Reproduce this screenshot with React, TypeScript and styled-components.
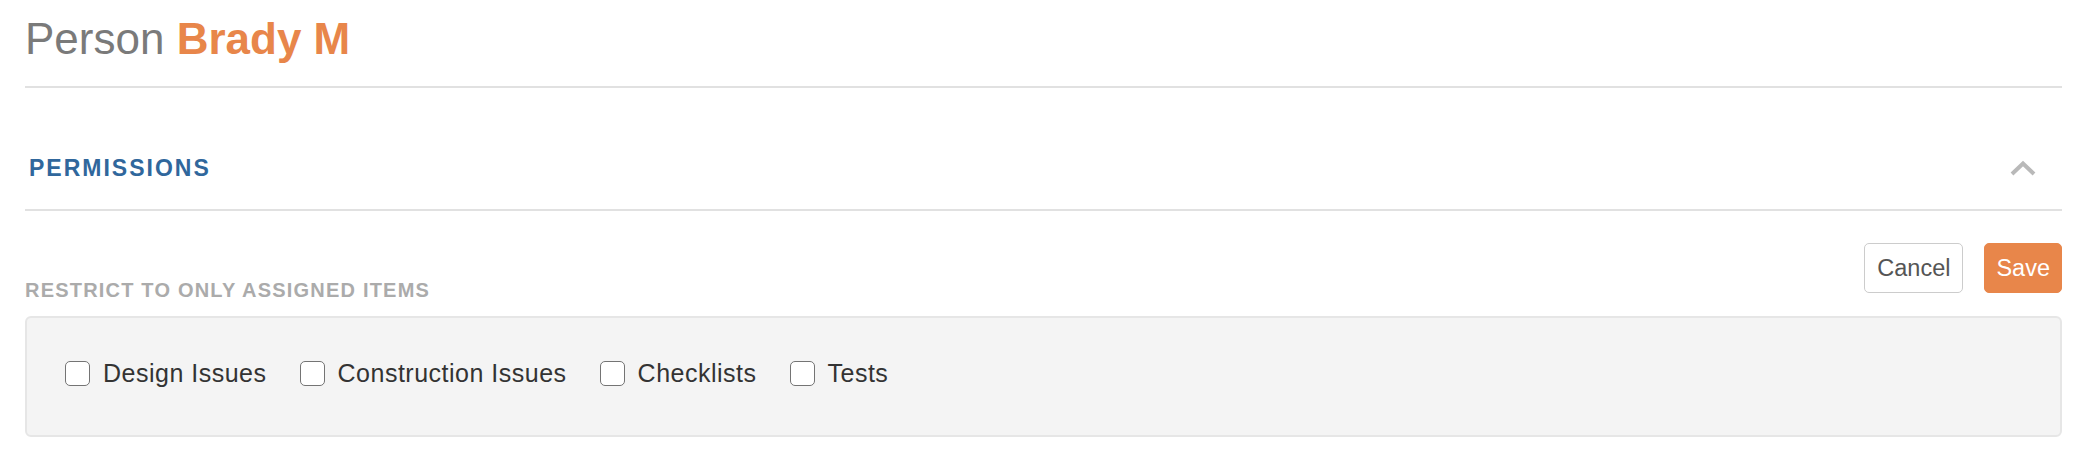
import { useState } from "react"
import styled, { createGlobalStyle } from "styled-components"

const GlobalStyle = createGlobalStyle`
  html, body {
    margin: 0;
    padding: 0;
    background: #ffffff;
  }
  body {
    font-family: "Liberation Sans", Arial, Helvetica, sans-serif;
  }
`

const orange = "#e8864a"

const Page = styled.div`
  margin: 0 24px 0 25px;
`

const Header = styled.h1`
  margin: 0;
  padding-top: 14px;
  padding-bottom: 22px;
  line-height: 50px;
  font-size: 44px;
  font-weight: normal;
  color: #7a7a7a;
  border-bottom: 2px solid #e1e1e1;
  white-space: nowrap;

  strong {
    color: ${orange};
    font-weight: bold;
  }
`

const SectionBar = styled.div`
  display: flex;
  align-items: center;
  justify-content: space-between;
  padding: 67px 26px 28px 4px;
  border-bottom: 2px solid #e1e1e1;
`

const SectionTitle = styled.h2`
  margin: 0;
  font-size: 23px;
  line-height: 26px;
  font-weight: bold;
  letter-spacing: 2px;
  color: #30679c;
`

const Chevron = styled.svg`
  width: 26px;
  height: 18px;
  filter: blur(0.6px);
`

const ToolRow = styled.div`
  display: flex;
  justify-content: space-between;
  align-items: flex-end;
  margin-top: 32px;
`

const SubLabel = styled.div`
  font-size: 20px;
  line-height: 20px;
  font-weight: bold;
  letter-spacing: 1.2px;
  color: #ababab;
`

const Actions = styled.div`
  display: flex;
  gap: 21px;
  margin-bottom: 7px;
`

const Button = styled.button<{ $primary?: boolean }>`
  height: 50px;
  padding: 0 ${(p) => (p.$primary ? "11px" : "12px")};
  border-radius: 5px;
  border: 1.5px solid ${(p) => (p.$primary ? orange : "#cccccc")};
  background: ${(p) => (p.$primary ? orange : "#ffffff")};
  color: ${(p) => (p.$primary ? "#ffffff" : "#555555")};
  font-family: inherit;
  font-size: 23.5px;
  cursor: pointer;
`

const OptionsBox = styled.div`
  margin-top: 16px;
  padding: 40px 38px 47px;
  background: #f4f4f4;
  border: 2px solid #e6e6e6;
  border-radius: 6px;
  display: flex;
  gap: 33px;
`

const Option = styled.label`
  display: flex;
  align-items: center;
  gap: 13px;
  font-size: 25px;
  line-height: 30px;
  letter-spacing: 0.5px;
  color: #333333;
  cursor: pointer;
`

const Check = styled.input`
  appearance: none;
  margin: 0;
  width: 25px;
  height: 25px;
  border: 1.5px solid #747474;
  border-radius: 5px;
  background: #ffffff;
  cursor: pointer;

  &:checked {
    background: ${orange};
    border-color: ${orange};
  }
`

const options = ["Design Issues", "Construction Issues", "Checklists", "Tests"]

const App: React.FC = () => {
  const [checked, setChecked] = useState<Record<string, boolean>>({})

  return (
    <Page>
      <GlobalStyle />
      <Header>
        Person <strong>Brady M</strong>
      </Header>

      <SectionBar>
        <SectionTitle>PERMISSIONS</SectionTitle>
        <Chevron viewBox="0 0 26 18">
          <polyline
            points="2,15 13,4.5 24,15"
            fill="none"
            stroke="#b9b9b9"
            strokeWidth="4"
          />
        </Chevron>
      </SectionBar>

      <ToolRow>
        <SubLabel>RESTRICT TO ONLY ASSIGNED ITEMS</SubLabel>
        <Actions>
          <Button>Cancel</Button>
          <Button $primary>Save</Button>
        </Actions>
      </ToolRow>

      <OptionsBox>
        {options.map((o) => (
          <Option key={o}>
            <Check
              type="checkbox"
              checked={!!checked[o]}
              onChange={(e) => setChecked({ ...checked, [o]: e.target.checked })}
            />
            {o}
          </Option>
        ))}
      </OptionsBox>
    </Page>
  )
}

export default App
